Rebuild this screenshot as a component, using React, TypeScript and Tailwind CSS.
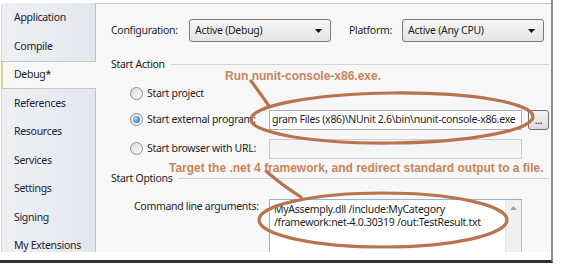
import React from 'react';

// project properties page, Debug tab selected, with brown annotations drawn on top
const tabs: { label: string; h: string; selected?: boolean }[] = [
  { label: 'Application', h: 'h-[29px]' },
  { label: 'Compile', h: 'h-[29px]' },
  { label: 'Debug*', h: 'h-[28px]', selected: true },
  { label: 'References', h: 'h-[29px]' },
  { label: 'Resources', h: 'h-[28px]' },
  { label: 'Services', h: 'h-[29px]' },
  { label: 'Settings', h: 'h-[28px]' },
  { label: 'Signing', h: 'h-[29px]' },
  { label: 'My Extensions', h: 'h-[28px]' },
];

const Radio = ({ checked }: { checked?: boolean }) => (
  <span className="w-[13px] h-[13px] rounded-full border border-[#8f8f8f] bg-linear-to-br from-[#dcdcdc] to-[#fbfbfb] flex items-center justify-center shrink-0">
    {checked && (
      <span className="w-[7px] h-[7px] rounded-full bg-[radial-gradient(circle_at_35%_35%,#a9d8f8,#1a5d9e)]" />
    )}
  </span>
);

const Combo = ({ value }: { value: string }) => (
  <div className="w-[142px] h-[23px] rounded-[3px] border border-[#7a7a7a] bg-linear-to-b from-[#f7f7f7] to-[#e4e4e4] flex items-center pl-[5px] pr-[8px]">
    <span className="flex-1">{value}</span>
    <svg width="7" height="4" viewBox="0 0 7 4">
      <path d="M0 0h7L3.5 4z" fill="#111" />
    </svg>
  </div>
);

const GroupHeader = ({ title, className }: { title: string; className: string }) => (
  <div className={`flex items-center h-[16px] ${className}`}>
    <span>{title}</span>
    <div className="flex-1 h-px bg-[#d3d3d3] ml-[6px]" />
  </div>
);

const App = () => {
  return (
    <div className="relative w-[562px] h-[271px] bg-white overflow-hidden font-['Noto_Sans',sans-serif] text-[10.5px] tracking-[-0.3px] text-[#1e1e1e]">
      {/* paper with drop shadow */}
      <div className="w-[553px] h-[263px] bg-white border-r-2 border-b-[3px] border-r-[#8d8d8d] border-b-[#2f2f2f]">
        <div className="flex h-[252px] pt-[3px] overflow-hidden">
          {/* tab list */}
          <div className="w-[96px] ml-[1px] flex flex-col rounded-tl-[4px] overflow-hidden">
            {tabs.map((t) =>
              t.selected ? (
                <div
                  key={t.label}
                  className={`${t.h} shrink-0 flex items-center pl-[11px] bg-[#f7f7f7] border-y border-[#c3c7cd] border-l-2 border-l-[#f2cf86]`}
                >
                  {t.label}
                </div>
              ) : (
                <div
                  key={t.label}
                  className={`${t.h} shrink-0 flex items-center pl-[12px] bg-linear-to-r from-[#eef0f4] to-[#e3e7ed] border-r border-r-[#bfc4cb] border-l border-l-[#d6dae0] text-[#1b2230]`}
                >
                  <span className="flex-1">{t.label}</span>
                </div>
              )
            )}
          </div>

          {/* page */}
          <div className="flex-1 bg-[#f7f7f7] border-t border-[#c3c7cd] pl-[15px] pr-[2px] flex flex-col">
            <div className="flex items-center h-[23px] mt-[15px]">
              <span className="w-[78px]">Configuration:</span>
              <Combo value="Active (Debug)" />
              <span className="w-[53px] ml-[18px]">Platform:</span>
              <Combo value="Active (Any CPU)" />
            </div>
            <div className="h-px bg-[#cfcfcf] mt-[10px] -ml-[2px]" />

            <GroupHeader title="Start Action" className="mt-[5px]" />

            <div className="pl-[19px] flex flex-col">
              <div className="flex items-center h-[20px] mt-[11px]">
                <Radio />
                <span className="ml-[4px]">Start project</span>
              </div>
              <div className="flex items-center h-[20px] mt-[6px]">
                <div className="w-[139px] flex items-center">
                  <Radio checked />
                  <span className="ml-[4px] whitespace-nowrap">Start external program:</span>
                </div>
                <div className="w-[253px] h-[20px] bg-white border border-[#abadb3] flex items-center pl-[2px] overflow-hidden whitespace-nowrap">
                  gram Files (x86)\NUnit 2.6\bin\nunit-console-x86.exe
                </div>
                <div className="w-[21px] h-[20px] ml-[6px] rounded-[3px] border border-[#707070] bg-linear-to-b from-[#f4f4f4] to-[#dcdcdc] flex items-center justify-center leading-none">
                  ...
                </div>
              </div>
              <div className="flex items-center h-[20px] mt-[9px]">
                <div className="w-[139px] flex items-center">
                  <Radio />
                  <span className="ml-[4px] whitespace-nowrap">Start browser with URL:</span>
                </div>
                <div className="w-[253px] h-[20px] bg-[#f4f4f4] border border-[#c9cbd0]" />
              </div>
            </div>

            <GroupHeader title="Start Options" className="mt-[12px]" />

            <div className="flex items-start mt-[12px] pl-[23px]">
              <span className="w-[135px] leading-[14px] whitespace-nowrap">Command line arguments:</span>
              <div className="w-[253px] h-[60px] bg-white border border-[#abadb3] border-t-[#8fb3d9] border-r-[#a9c6e6] flex">
                <div className="flex-1 pl-[4px] pt-[3px] leading-[13px] whitespace-nowrap overflow-hidden">
                  <div>MyAssemply.dll /include:MyCategory</div>
                  <div>/framework:net-4.0.30319 /out:TestResult.txt</div>
                </div>
                <div className="w-[16px] bg-[#f0f0f0] border-l border-[#e6e6e6] flex justify-center pt-[6px]">
                  <svg width="7" height="4" viewBox="0 0 7 4">
                    <path d="M0 4h7L3.5 0z" fill="#a0a0a0" />
                  </svg>
                </div>
              </div>
            </div>
          </div>
        </div>
      </div>

      {/* annotations */}
      <svg className="absolute left-0 top-0 pointer-events-none" width="562" height="271" viewBox="0 0 562 271">
        <g fill="none" stroke="#b8744f" strokeWidth="3.2" strokeLinecap="round">
          <ellipse cx="392" cy="118" rx="141" ry="25" transform="rotate(-0.6 392 118)" />
          <path d="M251 81 Q260 93 269 106" />
          <ellipse cx="383" cy="220" rx="124" ry="27" />
          <path d="M266 171 Q283 186 301 197" />
        </g>
      </svg>
      <div className="absolute left-[225px] top-[69px] font-['Liberation_Sans',Arial,sans-serif] font-bold text-[12px] tracking-normal leading-[14px] text-[#c8845a] whitespace-nowrap">
        Run nunit-console-x86.exe.
      </div>
      <div className="absolute left-[169px] top-[161px] font-['Liberation_Sans',Arial,sans-serif] font-bold text-[12px] tracking-normal leading-[14px] text-[#c8845a] whitespace-nowrap">
        Target the .net 4 framework, and redirect standard output to a file.
      </div>
    </div>
  );
};

export default App;
